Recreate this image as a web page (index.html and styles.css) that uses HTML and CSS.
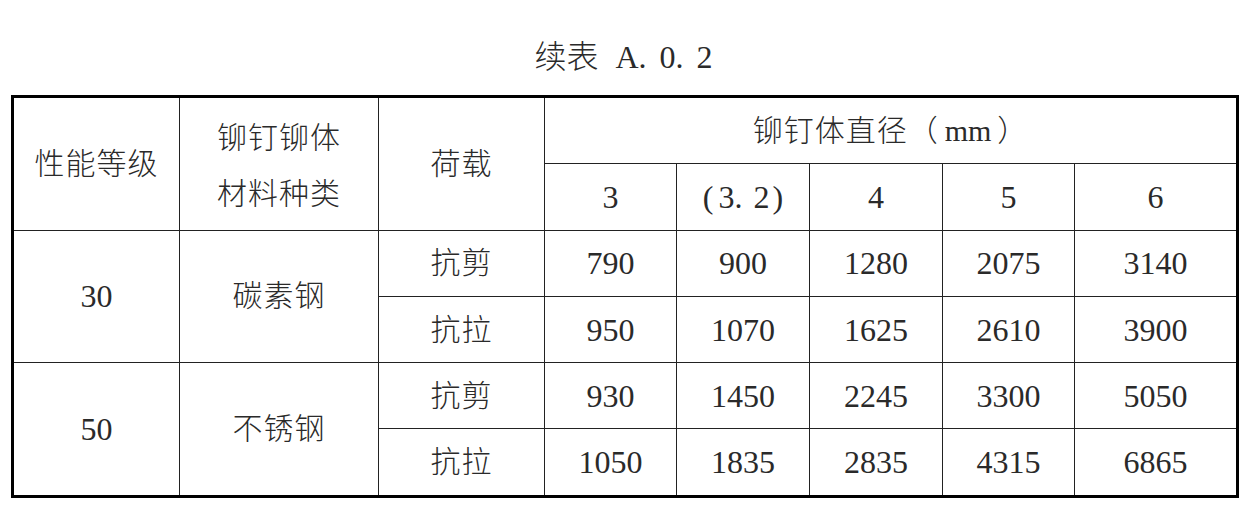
FILE: index.html
```html
<!DOCTYPE html>
<html lang="zh-CN">
<head>
<meta charset="utf-8">
<title>续表 A.0.2</title>
<link rel="stylesheet" href="styles.css">
</head>
<body>
<div class="page">
  <h1 class="title"><span class="title-cn">续表</span><span class="title-num">A<span class="dot">.</span>0<span class="dot">.</span>2</span></h1>
  <table class="spec">
    <colgroup>
      <col class="c1"><col class="c2"><col class="c3"><col class="c4"><col class="c5"><col class="c6"><col class="c7"><col class="c8">
    </colgroup>
    <thead>
      <tr class="h1">
        <th rowspan="2">性能等级</th>
        <th rowspan="2" class="two-line">铆钉铆体<br>材料种类</th>
        <th rowspan="2">荷载</th>
        <th colspan="5">铆钉体直径（<span class="unit">mm</span>）</th>
      </tr>
      <tr class="h2">
        <th class="num">3</th>
        <th class="num"><span class="lp">(</span>3.<span class="after-dot">2</span>)</th>
        <th class="num">4</th>
        <th class="num">5</th>
        <th class="num">6</th>
      </tr>
    </thead>
    <tbody>
      <tr>
        <td rowspan="2" class="num">30</td>
        <td rowspan="2">碳素钢</td>
        <td>抗剪</td>
        <td class="num">790</td><td class="num">900</td><td class="num">1280</td><td class="num">2075</td><td class="num">3140</td>
      </tr>
      <tr>
        <td>抗拉</td>
        <td class="num">950</td><td class="num">1070</td><td class="num">1625</td><td class="num">2610</td><td class="num">3900</td>
      </tr>
      <tr>
        <td rowspan="2" class="num">50</td>
        <td rowspan="2">不锈钢</td>
        <td>抗剪</td>
        <td class="num">930</td><td class="num">1450</td><td class="num">2245</td><td class="num">3300</td><td class="num">5050</td>
      </tr>
      <tr>
        <td>抗拉</td>
        <td class="num">1050</td><td class="num">1835</td><td class="num">2835</td><td class="num">4315</td><td class="num">6865</td>
      </tr>
    </tbody>
  </table>
</div>
</body>
</html>
```
FILE: styles.css
```css
html, body {
  margin: 0;
  padding: 0;
  background: #ffffff;
}

body {
  font-family: "Liberation Serif", "Noto Sans CJK SC", serif;
  font-weight: 300;
  color: #2a2a2a;
}

.page {
  width: 1225px;
  margin-left: 11px;
}

.title {
  margin: 0;
  height: 95px;
  box-sizing: border-box;
  padding-top: 38px;
  font-size: 32px;
  line-height: 32px;
  font-weight: 300;
  text-align: center;
  white-space: nowrap;
}

.title-cn {
  font-family: "Noto Sans CJK SC", sans-serif;
  margin-right: 17px;
}

.title .dot {
  margin-right: 13px;
}

.spec {
  width: 1225px;
  border-collapse: collapse;
  table-layout: fixed;
  border: 3px solid #000000;
}

.c1 { width: 167px; }
.c2 { width: 199px; }
.c3 { width: 166px; }
.c4 { width: 132px; }
.c5 { width: 133px; }
.c6 { width: 133px; }
.c7 { width: 132px; }
.c8 { width: 163px; }

.spec th,
.spec td {
  border: 1px solid #222222;
  padding: 0;
  height: 65.3px;
  text-align: center;
  vertical-align: middle;
  font-weight: 300;
  font-size: 30px;
  line-height: 36px;
  letter-spacing: 1px;
  white-space: nowrap;
}

.spec .two-line {
  line-height: 56px;
  padding-top: 4px;
}

.spec .unit {
  margin: 0 6px;
  letter-spacing: 0;
}

.spec .num {
  font-size: 32px;
  letter-spacing: 0;
}

.spec .lp {
  margin-right: 5px;
}

.spec .after-dot {
  margin-left: 11px;
  margin-right: 3px;
}
```
